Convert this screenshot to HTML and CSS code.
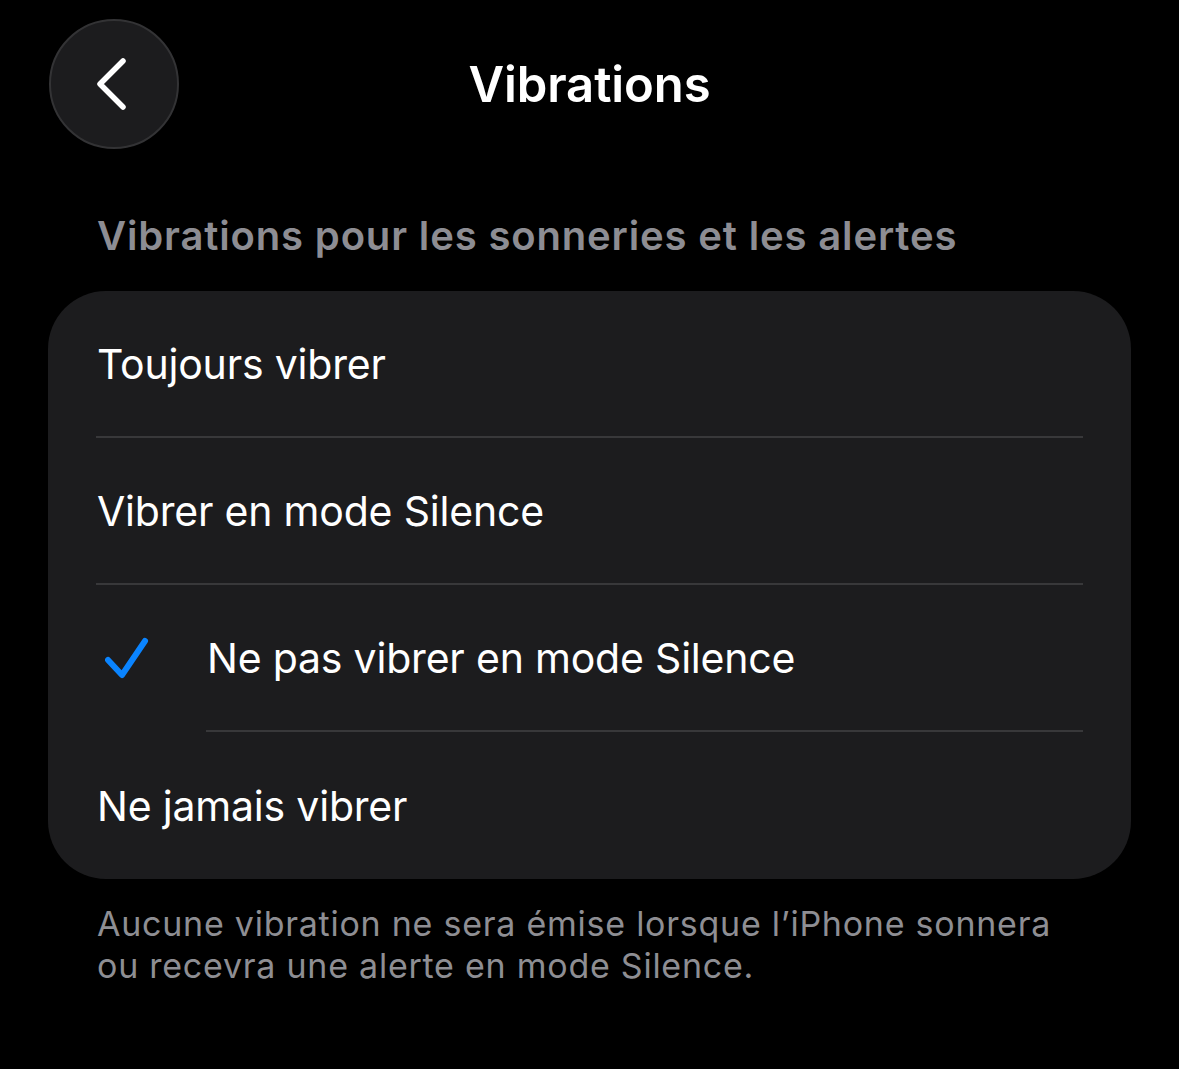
FILE: index.html
```html
<!DOCTYPE html>
<html lang="fr">
<head>
<meta charset="utf-8">
<title>Vibrations</title>
<link rel="stylesheet" href="styles.css">
</head>
<body>
<div class="screen">
  <header class="nav">
    <button class="back" aria-label="Retour">
      <svg width="130" height="130" viewBox="0 0 130 130">
        <path d="M74 42 L51 65 L74 88" fill="none" stroke="#fff" stroke-width="5.5" stroke-linecap="round" stroke-linejoin="round"/>
      </svg>
    </button>
    <h1 class="title">Vibrations</h1>
    <div class="spacer"></div>
  </header>

  <h2 class="section-title">Vibrations pour les sonneries et les alertes</h2>

  <ul class="list">
    <li class="row"><span class="label">Toujours vibrer</span></li>
    <li class="row"><span class="label">Vibrer en mode Silence</span></li>
    <li class="row checked">
      <span class="check">
        <svg width="44" height="46" viewBox="0 0 44 46">
          <path d="M3 25 L17 40 L40 6" fill="none" stroke="#0a84ff" stroke-width="6" stroke-linecap="round" stroke-linejoin="round"/>
        </svg>
      </span>
      <span class="label">Ne pas vibrer en mode Silence</span>
    </li>
    <li class="row"><span class="label">Ne jamais vibrer</span></li>
  </ul>

  <p class="footnote">Aucune vibration ne sera émise lorsque l’iPhone sonnera ou recevra une alerte en mode Silence.</p>
</div>
</body>
</html>
```

FILE: styles.css
```css
* { box-sizing: border-box; }

html, body {
  margin: 0;
  padding: 0;
  background: #000;
}

body {
  font-family: Inter, "Noto Sans", "Liberation Sans", sans-serif;
  color: #fff;
}

.screen {
  width: 1179px;
  height: 1069px;
  padding: 19px 48px 0 48px;
}

/* top navigation bar */
.nav {
  display: grid;
  grid-template-columns: 1fr auto 1fr;
  align-items: center;
  height: 130px;
}

.back {
  width: 130px;
  height: 130px;
  margin-left: 1px;
  padding: 0;
  border-radius: 50%;
  border: 2px solid #333335;
  background: #1c1c1e;
  display: flex;
  align-items: center;
  justify-content: center;
}

.back svg { display: block; flex: none; }

.title {
  margin: 0;
  font-size: 49px;
  font-weight: 600;
  letter-spacing: -0.1px;
  line-height: 1;
  color: #fff;
}

/* group header */
.section-title {
  margin: 63px 0 0 49px;
  font-size: 40px;
  font-weight: 600;
  line-height: 48px;
  color: #8d8d93;
  letter-spacing: 0.85px;
}

/* grouped list card */
.list {
  list-style: none;
  margin: 31px 0 0 0;
  padding: 0;
  width: 1083px;
  background: #1c1c1e;
  border-radius: 58px;
  overflow: hidden;
}

.row {
  display: flex;
  align-items: stretch;
  height: 147px;
  padding-left: 48px;
}

.label {
  flex: 1;
  display: flex;
  align-items: center;
  margin-right: 48px;
  padding-left: 1px;
  border-bottom: 2px solid #38383a;
  font-size: 41px;
  font-weight: 400;
  letter-spacing: -0.2px;
  color: #fff;
}

.row:last-child .label { border-bottom: 0; }

.check {
  flex: none;
  width: 110px;
  display: flex;
  align-items: center;
  padding-left: 9px;
  padding-bottom: 2px;
}

.check svg { display: block; }

/* explanatory text under the group */
.footnote {
  margin: 24px 0 0 49px;
  width: 985px;
  font-size: 34px;
  line-height: 42px;
  font-weight: 400;
  letter-spacing: 0.75px;
  color: #8e8e93;
}
```
